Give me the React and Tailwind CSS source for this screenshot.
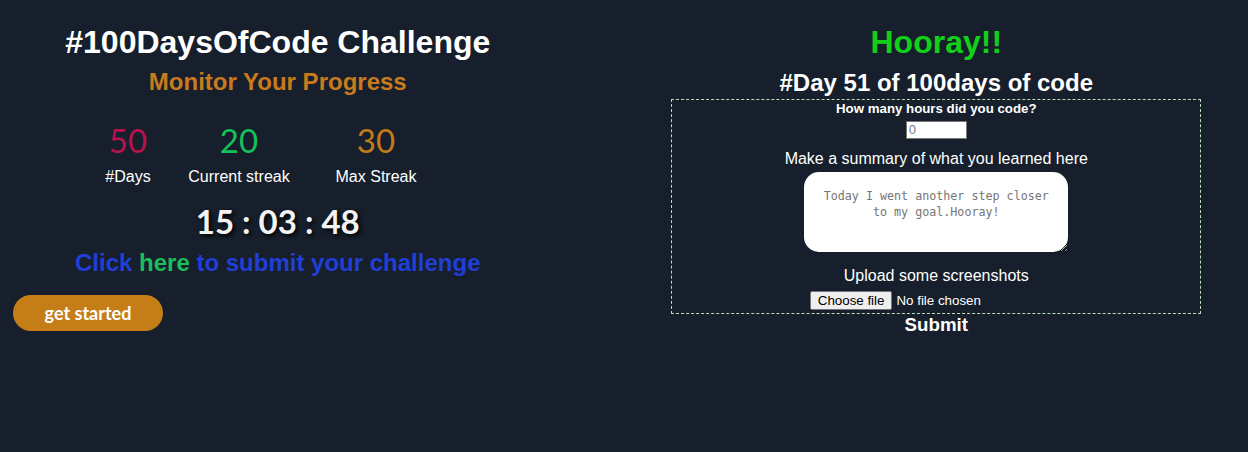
import React from "react";

function Stat({ value, label, color, width, offset }) {
    return (
        <div className={`flex flex-col items-center ${width} ${offset}`}>
            <span className={`font-['Lato',sans-serif] text-[33px] leading-[44px] ${color}`}>{value}</span>
            <span className="text-[16px] leading-[18px] mt-[6px] text-white">{label}</span>
        </div>
    );
}

export default function App() {
    return (
        <div className="min-h-[452px] w-full bg-[#161f2b] font-['Liberation_Sans',Arial,sans-serif] text-white">
            <div className="flex">
                {/* Left side */}
                <div className="w-[556px] flex flex-col pt-[24px]">
                    <h1 className="text-center text-[32px] leading-[37px] font-bold">#100DaysOfCode Challenge</h1>
                    <h2 className="text-center text-[24px] leading-[28px] font-bold text-[#c87b1c] mt-[7px]">Monitor Your Progress</h2>

                    <div className="flex pl-[88px] mt-[22px]">
                        <Stat value="50" label="#Days" color="text-[#b8134a]" width="w-[80px]" offset="" />
                        <Stat value="20" label="Current streak" color="text-[#16c05a]" width="w-[120px]" offset="ml-[11px]" />
                        <Stat value="30" label="Max Streak" color="text-[#c47a1a]" width="w-[100px]" offset="ml-[27px]" />
                    </div>

                    <div className="text-center font-['Lato',sans-serif] font-bold text-[33px] leading-[44px] mt-[13px] text-[#f3f3f3] [text-shadow:2px_2px_4px_#000]">
                        15 : 03 : 48
                    </div>

                    <p className="text-center text-[24px] leading-[28px] font-bold text-[#1f3fd8] mt-[6px]">
                        Click <span className="text-[#18bf5a]">here</span> to submit your challenge
                    </p>

                    <button className="ml-[13px] mt-[18px] w-[150px] h-[36px] rounded-full bg-[#c47d17] font-['Lato',sans-serif] font-bold text-[18px] text-white">
                        get started
                    </button>
                </div>

                {/* Right side */}
                <div className="ml-[69px] w-[624px] flex flex-col items-center pt-[24px]">
                    <h1 className="text-[32px] leading-[37px] font-bold text-[#12cf1a]">Hooray!!</h1>
                    <h2 className="text-[24px] leading-[28px] font-bold mt-[8px]">#Day 51 of 100days of code</h2>

                    <form className="mt-[2px] w-[530px] border border-dashed border-[#b8dfb8] flex flex-col items-center pt-[1px] pb-[2px]">
                        <h5 className="text-[13.28px] leading-[15px] font-bold">How many hours did you code?</h5>
                        <input
                            type="number"
                            placeholder="0"
                            className="mt-[5px] w-[61px] h-[18px] bg-white border border-[#767676] px-[2px] text-[13px] text-black placeholder:text-[#6d7b91]"
                        />
                        <p className="mt-[11px] text-[16px] leading-[18px]">Make a summary of what you learned here</p>
                        <textarea
                            placeholder="Today I went another step closer to my goal.Hooray!"
                            className="mt-[4px] w-[264px] h-[80px] rounded-[15px] bg-white px-[15px] pt-[16px] text-center text-[11.7px] leading-[16px] font-['DejaVu_Sans_Mono',monospace] text-black placeholder:text-[#757575]"
                        />
                        <p className="mt-[15px] text-[16px] leading-[18px]">Upload some screenshots</p>
                        <div className="mt-[6px] w-[253px] flex items-center">
                            <button type="button" className="h-[19px] px-[7px] bg-[#efefef] border border-[#767676] rounded-[2px] text-[13.33px] leading-[15px] text-black">
                                Choose file
                            </button>
                            <span className="ml-[4px] text-[13.33px]">No file chosen</span>
                        </div>
                    </form>
                    <button className="text-[18.72px] leading-[22px] font-bold">Submit</button>
                </div>
            </div>
        </div>
    );
}
